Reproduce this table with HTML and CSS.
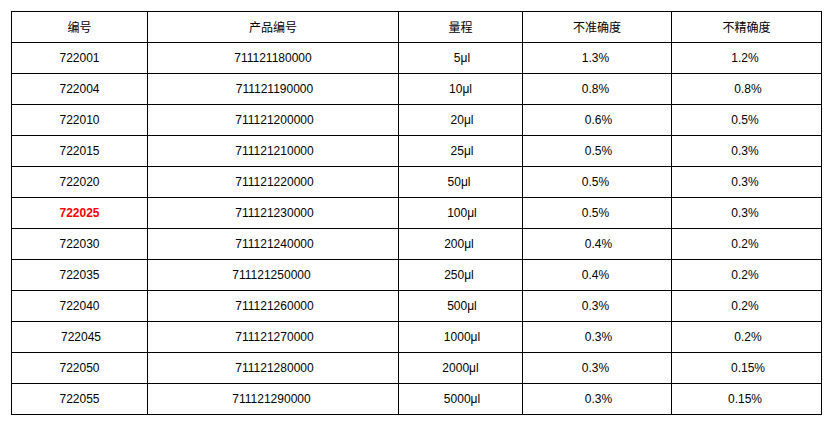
FILE: index.html
```html
<!DOCTYPE html>
<html lang="zh">
<head>
<meta charset="utf-8">
<title>量程表</title>
<link rel="stylesheet" href="styles.css">
</head>
<body>
<div class="wrap">
<table class="spec">
<colgroup>
<col class="c1"><col class="c2"><col class="c3"><col class="c4"><col class="c5">
</colgroup>
<thead>
<tr><th>编号</th><th>产品编号</th><th>量程</th><th>不准确度</th><th>不精确度</th></tr>
</thead>
<tbody>
<tr><td>722001</td><td>711121180000</td><td class="l">5μl</td><td class="r">1.3%</td><td class="r">1.2%</td></tr>
<tr><td>722004</td><td class="l">711121190000</td><td>10μl</td><td class="r">0.8%</td><td class="l">0.8%</td></tr>
<tr><td>722010</td><td class="l">711121200000</td><td class="l">20μl</td><td class="l">0.6%</td><td class="r">0.5%</td></tr>
<tr><td>722015</td><td class="l">711121210000</td><td class="l">25μl</td><td class="l">0.5%</td><td class="r">0.3%</td></tr>
<tr><td>722020</td><td class="l">711121220000</td><td class="r">50μl</td><td class="r">0.5%</td><td class="r">0.3%</td></tr>
<tr><td class="hot">722025</td><td class="l">711121230000</td><td class="l">100μl</td><td class="r">0.5%</td><td class="r">0.3%</td></tr>
<tr><td>722030</td><td class="l">711121240000</td><td class="r">200μl</td><td class="l">0.4%</td><td class="r">0.2%</td></tr>
<tr><td>722035</td><td class="r">711121250000</td><td class="r">250μl</td><td class="r">0.4%</td><td class="r">0.2%</td></tr>
<tr><td>722040</td><td class="l">711121260000</td><td class="l">500μl</td><td class="r">0.3%</td><td class="r">0.2%</td></tr>
<tr><td class="l">722045</td><td class="l">711121270000</td><td class="l">1000μl</td><td class="l">0.3%</td><td class="l">0.2%</td></tr>
<tr><td>722050</td><td class="l">711121280000</td><td>2000μl</td><td class="r">0.3%</td><td class="l">0.15%</td></tr>
<tr><td>722055</td><td class="r">711121290000</td><td class="l">5000μl</td><td class="l">0.3%</td><td class="r">0.15%</td></tr>
</tbody>
</table>
</div>
</body>
</html>
```
FILE: styles.css
```css
html, body {
  margin: 0;
  padding: 0;
  background: #fff;
}
.wrap {
  padding: 11px 0 0 11px;
}
.spec {
  border-collapse: collapse;
  table-layout: fixed;
  width: 810px;
  font-family: "Liberation Sans", Arial, "Noto Sans CJK SC", sans-serif;
  font-size: 12px;
  color: #000;
}
.c1 { width: 136px; }
.c2 { width: 251px; }
.c3 { width: 124px; }
.c4 { width: 149px; }
.c5 { width: 150px; }
.spec th, .spec td {
  border: 1px solid #000;
  height: 30px;
  padding: 0;
  text-align: center;
  vertical-align: middle;
  font-weight: normal;
  line-height: 14px;
  white-space: nowrap;
}
.spec th {
  font-family: "Noto Sans CJK SC", "Liberation Sans", sans-serif;
}
.spec td.l { padding-left: 3px; }
.spec td.r { padding-right: 3px; }
.spec td.hot {
  color: #ff0000;
  font-weight: bold;
}
```
